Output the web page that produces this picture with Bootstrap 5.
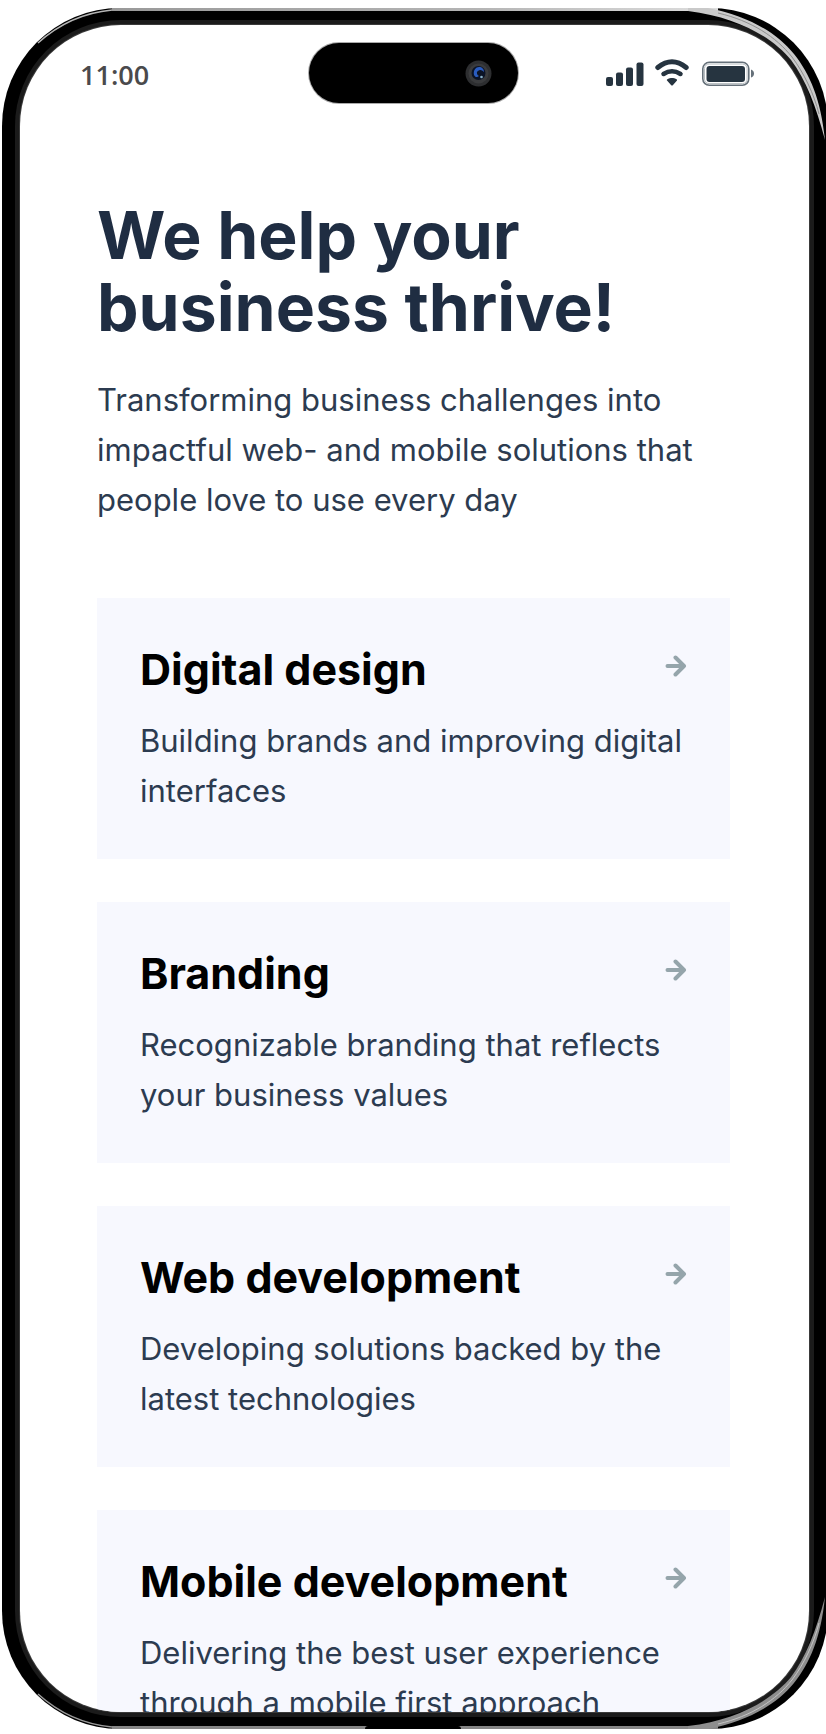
<!DOCTYPE html>
<html lang="en">
<head>
<meta charset="utf-8">
<meta name="viewport" content="width=device-width, initial-scale=1">
<title>We help your business thrive!</title>
<link href="https://cdn.jsdelivr.net/npm/bootstrap@5.3.0/dist/css/bootstrap.min.css" rel="stylesheet">
<style>
  body { background: #fff; font-family: Inter, "Liberation Sans", sans-serif; color: #2c3b50; overflow: hidden; }
  .phone {
    height: calc(100vh - 13px);
    margin: 8px -2px 5px 2px;
    padding: 17px 19px 17px 18px;
    border-radius: 118px;
    background: #000;
  }
  .edge { left: 110px; right: 110px; height: 3px; }
  .edge-top { top: 0; background: linear-gradient(90deg, #999, #b4b4b4 60%, #dedede); }
  .edge-bottom { bottom: 0; background: #858585; }
  .port { bottom: 0; left: 44%; width: 96px; height: 3px; background: #000; }
  .corner { width: 140px; height: 140px; }
  .screen { border-radius: 101px; background: #fff; box-shadow: 0 0 0 1px #3a3a3a, 0 0 0 5px #1b1b1b; }
  .status { padding: 18px 54px 0 52px; display: grid; grid-template-columns: 1fr auto 1fr; }
  .clock { font: 600 27px/36px "Open Sans", sans-serif; color: #4a4a4c; }
  .island { width: 209px; height: 60px; padding-right: 26px; background: #000; box-shadow: 0 0 0 1px #aaa; }
  .services { padding: 96px 79px 0 77px; }
  h1 { font-size: 66px; line-height: 72px; font-weight: 700; color: #1f2d42; margin-bottom: 32px; }
  .copy { font-size: 31px; line-height: 50px; margin: 0; }
  .service-list { gap: 43px; margin-top: 73px; }
  .service { padding: 43px; gap: 19px; background: #f7f8fe; color: inherit; }
  .service h2 { font-size: 43px; line-height: 56px; font-weight: 700; color: #000; margin: 0; }
</style>
</head>
<body>
<div class="phone position-relative">
  <div class="edge edge-top position-absolute"></div>
  <div class="edge edge-bottom position-absolute"></div>
  <div class="port position-absolute rounded-top"></div>

  <div class="screen h-100 overflow-hidden">
    <header class="status align-items-center">
      <time class="clock ps-2 pt-1">11:00</time>
      <div class="island rounded-pill d-flex align-items-center justify-content-end">
        <svg width="27" height="27" viewBox="0 0 27 27" aria-hidden="true">
          <circle cx="13.5" cy="13.5" r="13" fill="#2d2e30"/>
          <circle cx="13.5" cy="13.5" r="10" fill="#3a3b3d"/>
          <circle cx="13.5" cy="13" r="7" fill="#0b1326"/>
          <path d="M9 15c-1-5 2-8 5-8 3 0 5 2 5 5-2-2-4-3-6-1-2 1-1 4 1 5-2 2-4 1-5-1z" fill="#2a5cc0"/>
          <circle cx="16.500" cy="17" r="1.300" fill="#8ab2c8"/>
        </svg>
      </div>
      <div class="d-flex align-items-center justify-content-end">
        <svg width="149" height="28" viewBox="0 0 149 28" role="img" aria-label="Full signal, Wi-Fi, battery full">
          <g fill="#263440">
            <rect x="0" y="18" width="7" height="9" rx="2"/>
            <rect x="10" y="13.500" width="7" height="13.500" rx="2"/>
            <rect x="20" y="8.500" width="7" height="18.500" rx="2"/>
            <rect x="30.500" y="3.500" width="7" height="23.500" rx="2"/>
            <path d="M66 19c3 0 6 1.500 5 2.500l-4 4.500q-1 1-2 0l-4-4.500c-1-1 2-2.500 5-2.500z"/>
          </g>
          <g fill="none" stroke="#263440" stroke-linecap="round">
            <path d="M57.500 15q8.500-5.500 17 0" stroke-width="4.500"/>
            <path d="M51.800 8.500q14.200-11.500 28.400 0" stroke-width="5"/>
          </g>
          <rect x="96.800" y="3.300" width="46" height="23" rx="6.500" fill="#fff" stroke="#66717a" stroke-width="1.600"/>
          <rect x="98.500" y="5" width="42.600" height="19.600" rx="4.500" fill="none" stroke="#b7bdc1"/>
          <rect x="100.500" y="7" width="38.500" height="16" rx="3" fill="#263440"/>
          <path d="M145 10.500q3 1 3 4t-3 4z" fill="#66717a"/>
        </svg>
      </div>
    </header>

    <main class="services">
      <h1>We help your business thrive!</h1>
      <p class="copy">Transforming business challenges into impactful web- and mobile solutions that people love to use every day</p>

      <div class="service-list d-flex flex-column">
        <a href="#design" class="service d-flex flex-column text-decoration-none">
          <div class="d-flex align-items-center justify-content-between">
            <h2>Digital design</h2>
            <svg class="mb-1" width="22" height="24" viewBox="0 0 22 24" fill="none" stroke="#95a5ab" stroke-width="4" stroke-linecap="round" stroke-linejoin="round" aria-hidden="true"><path d="M2.500 11H19M10.500 2.500L19 11l-8.500 8.500"/></svg>
          </div>
          <p class="copy">Building brands and improving digital interfaces</p>
        </a>
        <a href="#branding" class="service d-flex flex-column text-decoration-none">
          <div class="d-flex align-items-center justify-content-between">
            <h2>Branding</h2>
            <svg class="mb-1" width="22" height="24" viewBox="0 0 22 24" fill="none" stroke="#95a5ab" stroke-width="4" stroke-linecap="round" stroke-linejoin="round" aria-hidden="true"><path d="M2.500 11H19M10.500 2.500L19 11l-8.500 8.500"/></svg>
          </div>
          <p class="copy">Recognizable branding that reflects your business values</p>
        </a>
        <a href="#web" class="service d-flex flex-column text-decoration-none">
          <div class="d-flex align-items-center justify-content-between">
            <h2>Web development</h2>
            <svg class="mb-1" width="22" height="24" viewBox="0 0 22 24" fill="none" stroke="#95a5ab" stroke-width="4" stroke-linecap="round" stroke-linejoin="round" aria-hidden="true"><path d="M2.500 11H19M10.500 2.500L19 11l-8.500 8.500"/></svg>
          </div>
          <p class="copy">Developing solutions backed by the latest technologies</p>
        </a>
        <a href="#mobile" class="service d-flex flex-column text-decoration-none">
          <div class="d-flex align-items-center justify-content-between">
            <h2>Mobile development</h2>
            <svg class="mb-1" width="22" height="24" viewBox="0 0 22 24" fill="none" stroke="#95a5ab" stroke-width="4" stroke-linecap="round" stroke-linejoin="round" aria-hidden="true"><path d="M2.500 11H19M10.500 2.500L19 11l-8.500 8.500"/></svg>
          </div>
          <p class="copy">Delivering the best user experience through a mobile first approach</p>
        </a>
      </div>
    </main>
  </div>

  <!-- Metal reflections on the rounded corners -->
  <svg class="corner position-absolute top-0 end-0 pe-none" viewBox="0 0 140 140" aria-hidden="true">
    <path d="M0 0H20C60 8 88 24 106 46C122 66 133 92 137 132C128 98 118 72 103 52C85 30 50 9 0 3z" fill="#c9c9c9"/>
    <path d="M30 5C64 13 88 29 104 49C116 65 126 86 131 106" fill="none" stroke="#8f8f8f"/>
  </svg>
  <svg class="corner position-absolute bottom-0 end-0 pe-none" viewBox="0 0 140 140" aria-hidden="true">
    <path d="M0 140H20C60 132 88 116 106 94C122 74 133 48 137 8C128 42 118 68 103 88C85 110 50 131 0 137z" fill="#8e8e8e"/>
    <path d="M30 135C64 127 88 111 104 91C116 75 126 54 131 34" fill="none" stroke="#c4c4c4"/>
  </svg>
  <svg class="corner position-absolute top-0 start-0 pe-none" viewBox="0 0 140 140" aria-hidden="true">
    <path d="M36 35Q68 6 110 2" fill="none" stroke="#b5b5b5" stroke-width="1.500"/>
  </svg>
  <svg class="corner position-absolute bottom-0 start-0 pe-none" viewBox="0 0 140 140" aria-hidden="true">
    <path d="M36 105Q68 134 110 138" fill="none" stroke="#999" stroke-width="1.500"/>
  </svg>
</div>
<script src="https://cdn.jsdelivr.net/npm/bootstrap@5.3.0/dist/js/bootstrap.bundle.min.js"></script>
</body>
</html>
